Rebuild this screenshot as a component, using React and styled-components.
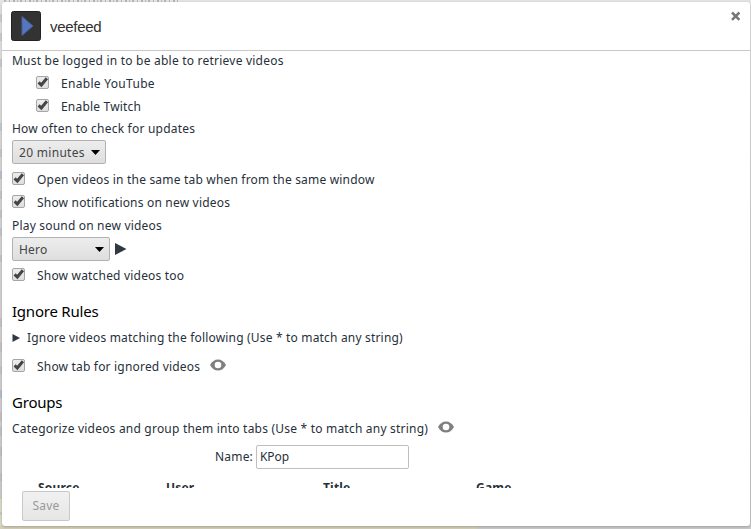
import React from "react";
import styled, { createGlobalStyle } from "styled-components";

const Global = createGlobalStyle`
  *{box-sizing:border-box}
  html,body{margin:0;overflow:hidden}
  body{font-family:"Noto Sans","Open Sans",sans-serif;font-size:12px;color:#27303a;background:#cbcbcb}
`;
const Backdrop = styled.div`
  width:751px;height:529px;padding:2px 1px 3px 2px;position:relative;
  background:
    linear-gradient(#d3cfb8,#d3cfb8) 0 100%/477px 3px no-repeat,
    linear-gradient(#dcdac6,#dcdac6) 0 100%/2px 30px no-repeat,
    linear-gradient(#e4e4e4,#d6d6d6 30%,#cbcbcb);
`;
const Marks = styled.svg`position:absolute;left:0;top:0;`;
const Dialog = styled.main`
  position:relative;width:748px;height:524px;background:#fff;border-radius:3px;
  display:flex;flex-direction:column;box-shadow:0 1px 3px rgba(0,0,0,.22);
`;
const Header = styled.header`
  height:49px;flex:none;border-bottom:1px solid #c8c8c8;display:flex;align-items:center;padding:0 9px;
`;
const Title = styled.h1`
  margin:1px 0 0 9px;font:400 15px/20px "Liberation Sans",sans-serif;flex:1;color:#303030;letter-spacing:-.3px;
`;
const Close = styled.button`
  width:11px;height:11px;padding:0;border:0;background:none;display:flex;margin-top:-20px;
`;
const Body = styled.section`height:437px;overflow:hidden;flex:none;padding-left:10px;`;
const Row = styled.div`
  height:${p => p.$h || 23}px;margin-top:${p => p.$top || 0}px;padding-left:${p => p.$indent || 0}px;
  display:flex;align-items:center;white-space:nowrap;
`;
const Text = styled.span`letter-spacing:${p => p.$track ?? 0.19}px;line-height:18px;`;
const Heading = styled.h2`
  margin:${p => p.$top}px 0 4px;height:24px;font-size:15px;line-height:24px;font-weight:400;color:#000;letter-spacing:-.22px;
`;
const Box = styled.span`
  width:13px;height:13px;border:1px solid #a5a5a5;border-radius:2px;margin-right:12px;position:relative;top:-1px;
  background:linear-gradient(#ededed,#dedede);display:block;
  svg{display:block;position:absolute;left:-1px;top:-2px}
`;
const Select = styled.button`
  width:${p => p.$w}px;height:24px;padding:1px 5px 0 6px;border:1px solid #b1b1b1;border-radius:2px;
  background:linear-gradient(#ededed,#dedede);display:flex;align-items:center;justify-content:space-between;
  font:inherit;color:#444;flex:none;
`;
const Icon = styled.svg`display:block;flex:none;margin-left:${p => p.$left || 0}px;margin-top:${p => p.$top || 0}px;`;
const Input = styled.input`
  width:153px;height:24px;border:1px solid #bfbfbf;border-radius:2px;padding:0 3px 1px;margin-left:3px;
  font:inherit;letter-spacing:-.1px;color:#27303a;background:#fff;
`;
const Columns = styled.div`
  margin-top:10px;padding-left:26px;display:grid;grid-template-columns:128px 157px 153px 100px;
  font-weight:700;line-height:18px;
`;
const Save = styled.button`
  width:48px;height:30px;margin:3px 0 0 20px;padding:0;border:1px solid #c8c8c8;border-radius:2px;
  background:linear-gradient(#f1f1f1,#e6e6e6);color:#999;font:inherit;flex:none;
`;
const Check = ({ label, indent, top, track, children }) => (
  <Row $indent={indent} $top={top}>
    <Box><svg width="15" height="14" viewBox="0 0 15 14"><path d="M2.6 7.4 5.3 10 10.9 3.2" fill="none" stroke="#444" strokeWidth="3" /></svg></Box>
    <Text $track={track}>{label}</Text>{children}
  </Row>
);
const Arrow = () => <Icon width="9" height="6" viewBox="0 0 9 6"><path d="M0 0H9L4.5 5Z" fill="#000" /></Icon>;
const Eye = ({ top = -3 }) => (
  <Icon $left={10} $top={top} width="16" height="12" viewBox="0 0 16 12">
    <path fillRule="evenodd" fill="#808080" d="M0 6Q3 .5 8 .5T16 6Q13 11.5 8 11.5T0 6ZM8 2.7A3.3 3.3 0 1 0 8 9.3 3.3 3.3 0 0 0 8 2.7Z" />
  </Icon>
);

export default function App() {
  return (
    <>
      <Global />
      <Backdrop>
        <Marks width="751" height="529" viewBox="0 0 751 529" fill="none">
          <path d="M4 1H180" stroke="#b8b8b8" strokeWidth="2" strokeDasharray="2 3 1 3 2 2 1 2" />
          <path d="M1 14V22M1 33V41M1 59V67M1 123V131M1 149V157M1 191V199M1 210V218M1 228V236M1 255V262M1 318V327M1 342V352M1 366V374M1 412V421M1 427V436M1 447V456M1 473V481M1 512V515" stroke="#b8b8b8" />
          <path d="M1 171V179M1 390V398" stroke="#9fadcf" />
        </Marks>
        <Dialog>
          <Header>
            <Icon $top={-1} width="30" height="30" viewBox="0 0 30 30">
              <rect x=".5" y=".5" width="29" height="29" rx="2" fill="#333" stroke="#222" />
              <path d="M11 5.5 22 15 11 24.5Z" fill="#5676bd" stroke="#46609a" />
            </Icon>
            <Title>veefeed</Title>
            <Close aria-label="Close"><svg width="11" height="11" viewBox="0 0 11 11"><path d="M2 1.5 9.4 8.9M9.4 1.5 2 8.9" stroke="#777" strokeWidth="2.5" /></svg></Close>
          </Header>
          <Body>
            <Row $h={20}><Text $track={0.22}>Must be logged in to be able to retrieve videos</Text></Row>
            <Check indent={24} top={1} track={0.3} label="Enable YouTube" />
            <Check indent={24} label="Enable Twitch" />
            <Row $h={22}><Text $track={0.22}>How often to check for updates</Text></Row>
            <Row $h={24}><Select $w={94}><Text $track={0.3}>20 minutes</Text><Arrow /></Select></Row>
            <Check top={4} label="Open videos in the same tab when from the same window" />
            <Check label="Show notifications on new videos" />
            <Row><Text>Play sound on new videos</Text></Row>
            <Row $h={24}><Select $w={98}><Text>Hero</Text><Arrow /></Select>
              <Icon $left={5} width="12" height="12" viewBox="0 0 12 12"><path d="M0 0 11.5 6 0 12Z" fill="#303942" /></Icon></Row>
            <Check top={3} label="Show watched videos too" />
            <Heading $top={12}>Ignore Rules</Heading>
            <Row $h={22}><Icon width="8" height="8" viewBox="0 0 8 8"><path d="M.5 0 8 4 .5 8Z" fill="#303942" /></Icon>
              <Icon width="7" height="1" /><Text $track={0.18}>Ignore videos matching the following (Use * to match any string)</Text></Row>
            <Check top={6} label="Show tab for ignored videos"><Eye /></Check>
            <Heading $top={12}>Groups</Heading>
            <Row $h={22}><Text $track={0.21}>Categorize videos and group them into tabs (Use * to match any string)</Text><Eye top={-4} /></Row>
            <Row $h={24} $top={5} $indent={203}><Text>Name:</Text><Input defaultValue="KPop" /></Row>
            <Columns><Text>Source</Text><Text>User</Text><Text>Title</Text><Text>Game</Text></Columns>
          </Body>
          <Save><Text>Save</Text></Save>
        </Dialog>
      </Backdrop>
    </>
  );
}
